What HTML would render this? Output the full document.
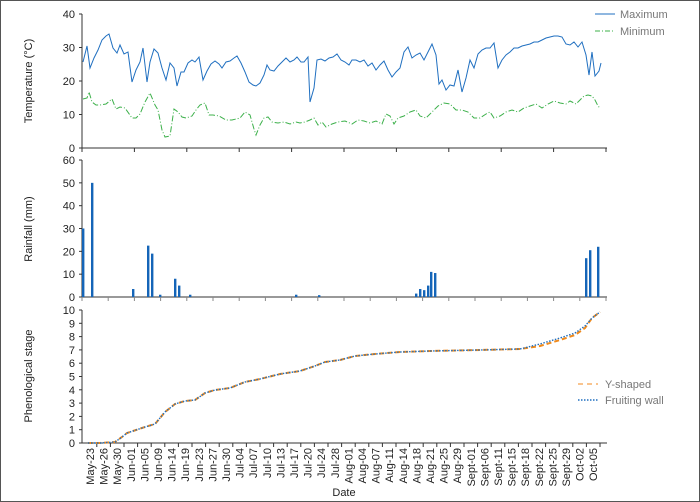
<!DOCTYPE html>
<html><head><meta charset="utf-8"><style>
html,body{margin:0;padding:0;background:#fff}
#c{position:relative;width:698px;height:500px;border:1px solid #555;overflow:hidden}
svg text{font-family:"Liberation Sans",sans-serif;fill:#222}
</style></head><body><div id="c">
<svg id="s" width="698" height="500" viewBox="1 1 698 500" xmlns="http://www.w3.org/2000/svg">
<g font-size="11">
<text x="32" y="81" transform="rotate(-90 32 81)" text-anchor="middle">Temperature (°C)</text>
<text x="32" y="229" transform="rotate(-90 32 229)" text-anchor="middle">Rainfall (mm)</text>
<text x="32" y="376" transform="rotate(-90 32 376)" text-anchor="middle">Phenological stage</text>
<text x="344" y="496" text-anchor="middle">Date</text>
</g>
<g font-size="11" fill="#888">
<line x1="595" y1="14" x2="615" y2="14" stroke="#1f6fc0" stroke-width="1"/>
<text x="620" y="18" style="fill:#777">Maximum</text>
<line x1="595" y1="31" x2="615" y2="31" stroke="#3cb04a" stroke-width="1" stroke-dasharray="5,2,1,2"/>
<text x="620" y="35" style="fill:#777">Minimum</text>
<line x1="578" y1="384" x2="598" y2="384" stroke="#f5a04a" stroke-width="1.3" stroke-dasharray="5,4"/>
<text x="605" y="388" style="fill:#777">Y-shaped</text>
<line x1="578" y1="400" x2="598" y2="400" stroke="#1f6fc0" stroke-width="1.5" stroke-dasharray="1.5,1.5"/>
<text x="605" y="404" style="fill:#777">Fruiting wall</text>
</g>
<g id="g"></g>
</svg></div>
<script>
var g=document.getElementById('g'),h='';
function L(a,b,c,d,s,w){h+='<line x1="'+a+'" y1="'+b+'" x2="'+c+'" y2="'+d+'" stroke="'+(s||'#333')+'" stroke-width="'+(w||1)+'"/>';}
function T(x,y,t,a,extra){h+='<text x="'+x+'" y="'+y+'" font-size="11" text-anchor="'+(a||'end')+'" '+(extra||'')+'>'+t+'</text>';}
L(82,14,82,148);L(82,148,607,148);
for(var i=0;i<=4;i++){var y=148-i*33.5;L(79,y,82,y);T(75,y+4,i*10);}
for(var x=82;x<=607;x+=52.4)L(x,148,x,152);
L(82,160,82,297);L(82,297,607,297);
for(i=0;i<=6;i++){y=297-i*22.83;L(79,y,82,y);T(75,y+4,i*10);}
for(x=82;x<=607;x+=26.2)L(x,297,x,301,'#888');
L(82,310,82,443);L(82,443,607,443);
for(i=0;i<=10;i++){y=443-i*13.3;L(79,y,82,y);T(75,y+4,i);}
var d="May-23,May-26,May-30,Jun-01,Jun-05,Jun-09,Jun-14,Jun-19,Jun-23,Jun-27,Jun-30,Jul-04,Jul-07,Jul-10,Jul-13,Jul-17,Jul-20,Jul-24,Jul-28,Aug-01,Aug-04,Aug-07,Aug-11,Aug-14,Aug-18,Aug-21,Aug-25,Aug-29,Sept-01,Sept-06,Sept-11,Sept-15,Sept-18,Sept-22,Sept-25,Sept-29,Oct-02,Oct-05".split(',');
for(i=0;i<d.length;i++){x=90+i*13.6;L(x+6.8,443,x+6.8,447);h+='<text x="'+(x+4)+'" y="448" font-size="11" text-anchor="end" transform="rotate(-90 '+(x+4)+' 448)">'+d[i]+'</text>';}
function P(pts,s,w,da){h+='<polyline fill="none" stroke="'+s+'" stroke-width="'+w+'" '+(da?'stroke-dasharray="'+da+'"':'')+' points="'+pts+'"/>';}
var mx="83,62 87,46 90,68 94,58 98,50 102,40 106,36 109,34 113,48 117,53 120,45 124,54 128,52 132,82 136,70 140,62 143,48 147,82 150,62 154,49 158,53 162,68 166,80 170,63 174,68 177,86 181,72 184,72 188,63 192,60 195,62 199,57 203,80 207,71 211,64 215,61 219,64 222,68 226,62 230,61 234,58 237,56 241,63 245,72 249,82 253,85 256,86 260,83 264,75 267,65 270,70 274,71 278,66 282,62 286,58 290,62 294,60 297,57 301,62 304,62 308,57 310,102 314,88 317,60 321,59 325,61 329,58 333,57 337,54 341,60 345,62 349,65 352,60 356,60 360,62 364,60 368,66 372,63 376,70 380,65 384,61 388,70 392,77 396,72 400,68 404,52 408,47 412,58 416,55 420,53 424,60 428,52 432,44 436,55 439,84 442,80 446,90 450,85 454,86 458,70 462,92 466,78 470,60 474,68 478,54 482,50 486,48 490,48 494,43 498,68 502,60 506,55 510,52 514,48 518,48 522,46 526,45 530,44 534,42 538,42 542,40 546,38 550,37 554,36 558,36 562,37 566,44 570,45 574,42 578,47 582,42 586,55 589,75 592,52 595,76 599,71 601,63";
P(mx,'#1f6fc0',1);
var mn="83,99 87,98 89,92 92,102 96,105 100,105 106,104 112,99 116,109 120,107 125,108 132,118 136,118 140,114 145,102 150,93 155,105 158,110 162,130 165,137 170,136 174,109 178,112 182,117 186,118 192,116 196,110 200,105 205,103 209,115 213,115 219,116 226,120 232,120 240,118 245,112 250,115 254,129 256,135 260,125 264,118 268,117 272,122 278,123 284,122 290,124 296,122 300,123 305,122 310,120 314,118 318,125 322,122 326,127 332,124 338,122 345,121 352,124 358,120 364,121 370,123 376,121 382,124 386,114 390,116 394,124 398,118 404,116 410,112 416,110 420,116 426,118 432,112 438,106 444,103 450,104 456,110 462,110 468,112 474,118 480,118 486,114 490,112 494,118 500,116 506,112 512,110 518,112 524,108 530,106 536,104 542,108 548,104 554,101 560,103 566,104 570,101 576,104 580,100 584,96 588,95 592,96 595,100 598,106 600,108";
P(mn,'#3cb04a',1,'6,2,1,2');
var r=[[83,30],[92,50],[133,3.5],[148,22.5],[152,19],[160,1],[175,8],[179,5],[190,1],[296,1],[319,0.8],[416,1.5],[420,3.5],[424,3],[428,5],[431,11],[435,10.5],[586,17],[590,20.5],[598,22]];
r.forEach(function(b){var hh=b[1]*2.283;h+='<rect x="'+(b[0]-1)+'" y="'+(297-hh)+'" width="2.4" height="'+hh+'" fill="#1565b8"/>';});
var ph="88,443 100,443 115,442 122,437 127,433 136,430 145,427 155,424 165,412 175,404 185,401 195,400 205,393 215,390 230,388 245,382 260,379 280,374 300,371 315,366 325,362 340,360 355,356 375,354 400,352 430,351 480,350 520,349 540,346 560,340 575,335 585,328 592,318 600,312";
P(ph,'#f08a1c',2,'5,3');
P(ph.replace(/(\d+),(\d+)/g,function(m,a,b){return a+','+(+b+ (a>520&&a<590?-2:0))}),'#1f6fc0',1.4,'1.5,1.5');
g.innerHTML=h;
</script>
</body></html>
